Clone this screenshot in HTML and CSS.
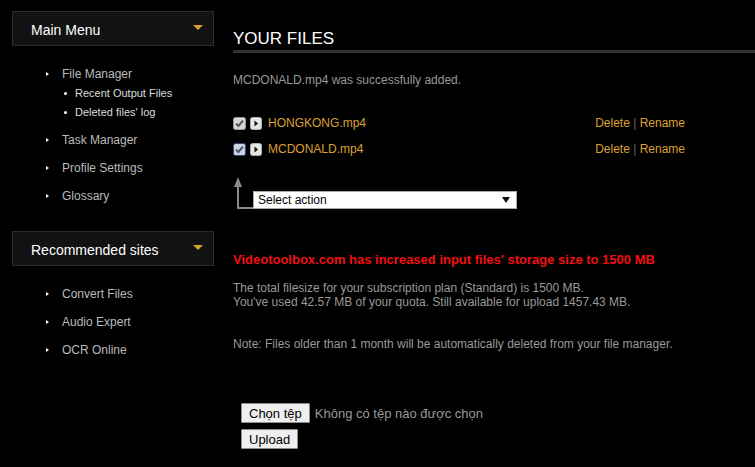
FILE: index.html
```html
<!DOCTYPE html>
<html lang="en">

<head>
    <meta charset="UTF-8">
    <meta name="viewport" content="width=device-width, initial-scale=1.0">
    <title>Your Files</title>
    <link rel="stylesheet" href="styles.css">
</head>

<body>
    <div class="page">
        <!-- Sidebar -->
        <div class="sidebar">
            <div class="menu-box">
                <span class="menu-title">Main Menu</span>
                <span class="caret"></span>
            </div>
            <ul class="menu">
                <li>File Manager
                    <ul class="sub-menu">
                        <li>Recent Output Files</li>
                        <li>Deleted files' log</li>
                    </ul>
                </li>
                <li>Task Manager</li>
                <li>Profile Settings</li>
                <li>Glossary</li>
            </ul>

            <div class="menu-box">
                <span class="menu-title">Recommended sites</span>
                <span class="caret"></span>
            </div>
            <ul class="menu">
                <li>Convert Files</li>
                <li>Audio Expert</li>
                <li>OCR Online</li>
            </ul>
        </div>

        <!-- Main content -->
        <div class="content">
            <h1>YOUR FILES</h1>
            <p class="message">MCDONALD.mp4 was successfully added.</p>

            <div class="file-list">
                <div class="file-row">
                    <svg class="icon" width="13" height="13" viewBox="0 0 13 13">
                        <rect x="0.5" y="0.5" width="12" height="12" rx="2" fill="#d6d6d6" stroke="#9a9a9a"/>
                        <path d="M3 6.6 L5.4 9 L10 3.6" fill="none" stroke="#555" stroke-width="2"/>
                    </svg>
                    <svg class="icon play" width="12" height="13" viewBox="0 0 12 13">
                        <rect x="0.5" y="0.5" width="11" height="12" rx="2" fill="#e6e6e6" stroke="#b0b0b0"/>
                        <path d="M4.5 3.5 L8 6.5 L4.5 9.5 Z" fill="#111"/>
                    </svg>
                    <span class="file-name">HONGKONG.mp4</span>
                    <span class="actions">Delete <span class="sep">|</span> Rename</span>
                </div>
                <div class="file-row">
                    <svg class="icon" width="13" height="13" viewBox="0 0 13 13">
                        <rect x="0.5" y="0.5" width="12" height="12" rx="2" fill="#c9d3e6" stroke="#33457a"/>
                        <path d="M3 6.6 L5.4 9 L10 3.6" fill="none" stroke="#555" stroke-width="2"/>
                    </svg>
                    <svg class="icon play" width="12" height="13" viewBox="0 0 12 13">
                        <rect x="0.5" y="0.5" width="11" height="12" rx="2" fill="#e6e6e6" stroke="#b0b0b0"/>
                        <path d="M4.5 3.5 L8 6.5 L4.5 9.5 Z" fill="#111"/>
                    </svg>
                    <span class="file-name">MCDONALD.mp4</span>
                    <span class="actions">Delete <span class="sep">|</span> Rename</span>
                </div>
            </div>

            <div class="action-row">
                <svg class="arrow" width="20" height="34" viewBox="0 0 20 34">
                    <path d="M5 9 V32 H20" fill="none" stroke="#8a8a8a" stroke-width="2"/>
                    <path d="M1 11 L5 1 L9 11 Z" fill="#8a8a8a"/>
                </svg>
                <div class="select-box">
                    <span>Select action</span>
                    <svg width="8" height="6" viewBox="0 0 8 6">
                        <path d="M0 0 H8 L4 6 Z" fill="#111"/>
                    </svg>
                </div>
            </div>

            <p class="notice">Videotoolbox.com has increased input files' storage size to 1500 MB</p>
            <p class="info">The total filesize for your subscription plan (Standard) is 1500 MB.<br>
                You've used 42.57 MB of your quota. Still available for upload 1457.43 MB.</p>
            <p class="info note">Note: Files older than 1 month will be automatically deleted from your file manager.</p>

            <div class="upload">
                <div class="file-input">
                    <button>Chọn tệp</button>
                    <span class="no-file">Không có tệp nào được chọn</span>
                </div>
                <button>Upload</button>
            </div>
        </div>
    </div>
</body>

</html>
```

FILE: styles.css
```css
body {
    margin: 0;
    background-color: #000;
    font-family: "Liberation Sans", Arial, sans-serif;
    color: #999;
}

.page {
    display: flex;
    align-items: flex-start;
}

/* Sidebar */
.sidebar {
    width: 202px;
    padding: 11px 0 0 12px;
    flex-shrink: 0;
}

.menu-box {
    height: 33px;
    background-color: #121212;
    border: 1px solid #2b2b2b;
    display: flex;
    align-items: center;
    justify-content: space-between;
    padding: 0 10px 0 18px;
    color: #fff;
    font-size: 14px;
}

.menu-title {
    padding-top: 2px;
}

.caret {
    width: 0;
    height: 0;
    border-left: 5px solid transparent;
    border-right: 5px solid transparent;
    border-top: 5px solid #d9a030;
    margin-bottom: 3px;
}

.menu {
    list-style: none;
    margin: 18px 0 17px;
    padding: 0 0 0 50px;
    font-size: 12px;
    color: #bbb;
}

.menu > li {
    position: relative;
    line-height: 20px;
    padding-bottom: 8px;
}

.menu > li::before {
    content: "";
    position: absolute;
    left: -16px;
    top: 8px;
    border-top: 2.5px solid transparent;
    border-bottom: 2.5px solid transparent;
    border-left: 3px solid #fff;
}

.sub-menu {
    list-style: none;
    margin: 0;
    padding: 0 0 0 13px;
    font-size: 11px;
    color: #ddd;
}

.sub-menu li {
    position: relative;
    line-height: 19px;
}

.sub-menu li::before {
    content: "";
    position: absolute;
    left: -11px;
    top: 8px;
    width: 3px;
    height: 3px;
    border-radius: 50%;
    background-color: #fff;
}

/* Main content */
.content {
    flex: 1;
    padding: 29px 0 0 19px;
}

.content h1 {
    margin: 0;
    font-size: 17px;
    font-weight: normal;
    line-height: 20px;
    color: #fff;
    padding-bottom: 1px;
    border-bottom: 3px solid #333;
}

.message {
    margin: 20px 0 0;
    font-size: 12px;
    line-height: 14px;
}

.file-list {
    margin-top: 23px;
    width: 452px;
}

.file-row {
    height: 26px;
    display: flex;
    align-items: center;
    font-size: 12px;
    color: #dda033;
}

.icon.play {
    margin-left: 4px;
}

.file-name {
    margin-left: 6px;
}

.actions {
    margin-left: auto;
}

.sep {
    color: #666;
}

.action-row {
    display: flex;
    align-items: flex-end;
    margin-top: 14px;
}

.arrow {
    display: block;
}

.select-box {
    width: 252px;
    height: 16px;
    margin-bottom: 1px;
    background-color: #fff;
    border: 1px solid #aaa;
    display: flex;
    align-items: center;
    justify-content: space-between;
    padding: 0 6px 0 4px;
    font-size: 12px;
    color: #000;
}

.notice {
    margin: 42px 0 0;
    font-size: 13px;
    font-weight: bold;
    line-height: 15px;
    color: #f01010;
}

.info {
    margin: 14px 0 0;
    font-size: 12px;
    line-height: 14px;
}

.info.note {
    margin-top: 28px;
}

.upload {
    margin: 52px 0 0 8px;
}

.file-input {
    display: flex;
    align-items: center;
    margin-bottom: 6px;
}

.upload button {
    font-family: "Liberation Sans", Arial, sans-serif;
    font-size: 13px;
    height: 20px;
    padding: 0 7px;
    background-color: #efefef;
    border: 1px solid #8f8f8f;
    border-radius: 1px;
    color: #000;
}

.no-file {
    margin-left: 5px;
    font-size: 13px;
    color: #999;
}
```
